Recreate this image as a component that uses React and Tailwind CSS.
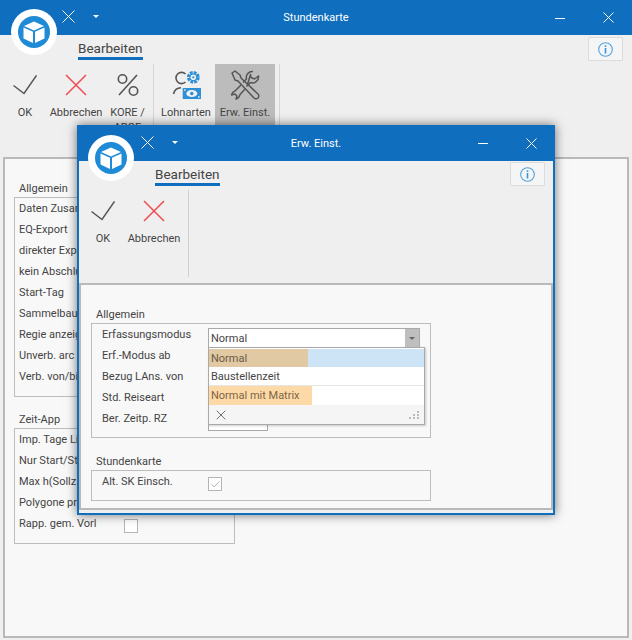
import React from 'react';
import { Check, X } from 'lucide-react';

function CubeLogo({ className }) {
  return (
    <div className={`${className} absolute w-[46px] h-[46px] rounded-full bg-white flex items-center justify-center`}>
      <div className="w-[32px] h-[32px] rounded-full bg-[#1f8ad6] flex items-center justify-center">
        <svg width="24" height="24" viewBox="0 0 24 24" fill="#fff">
          <path d="M12 1.5 L22 6 L12 10.5 L2 6 Z" />
          <path d="M1.5 7.5 L11 11.8 V23 L1.5 18.5 Z" />
          <path d="M22.5 7.5 L13 11.8 V23 L22.5 18.5 Z" />
        </svg>
      </div>
    </div>
  );
}

function TitleBar({ title, height, rightPad }) {
  return (
    <div className={`${height} shrink-0 bg-[#106ebe] grid grid-cols-[1fr_auto_1fr] items-center text-white`}>
      <div className="flex items-center pl-[62px] gap-[18px] -mt-[2px]">
        <svg width="13" height="13" viewBox="0 0 13 13" stroke="#fff" strokeWidth="1"><path d="M0.5 0.5 L12.5 12.5 M12.5 0.5 L0.5 12.5" /></svg>
        <div className="w-0 h-0 border-x-[3px] border-x-transparent border-t-[3px] border-t-white" />
      </div>
      <div className="text-[11px] leading-none">{title}</div>
      <div className={`${rightPad} flex items-center justify-end gap-[38px]`}>
        <div className="w-[10px] h-px bg-white mt-[1px]" />
        <svg width="11" height="11" viewBox="0 0 11 11" stroke="#fff" strokeWidth="1"><path d="M0.5 0.5 L10.5 10.5 M10.5 0.5 L0.5 10.5" /></svg>
      </div>
    </div>
  );
}

function InfoButton({ className }) {
  return (
    <div className={`${className} w-[35px] h-[24px] border border-[#dcdcdc] bg-[#f5f5f5] rounded-[1px] flex items-center justify-center`}>
      <svg width="15" height="15" viewBox="0 0 15 15" fill="none">
        <circle cx="7.5" cy="7.5" r="6.8" stroke="#4fa3e0" strokeWidth="1.1" />
        <rect x="6.7" y="3.3" width="1.6" height="1.6" fill="#3a95d8" />
        <rect x="6.7" y="6" width="1.6" height="5.5" fill="#3a95d8" />
      </svg>
    </div>
  );
}

function CheckIcon() {
  return (
    <svg width="24" height="20" viewBox="0 0 24 20" fill="none" stroke="#555" strokeWidth="1.5"><path d="M0.5 10.5 L11 18.5 L23.5 0.5" /></svg>
  );
}

function CrossIcon() {
  return (
    <svg width="22" height="22" viewBox="0 0 22 22" fill="none" stroke="#ee4a4f" strokeWidth="1.5"><path d="M1 1 L21 21 M21 1 L1 21" /></svg>
  );
}

function PercentIcon() {
  return (
    <svg width="22" height="22" viewBox="0 0 22 22" fill="none" stroke="#555" strokeWidth="1.6">
      <path d="M20 1 L2 21" />
      <circle cx="5.5" cy="5" r="4.2" />
      <circle cx="16.5" cy="17" r="4.2" />
    </svg>
  );
}

function LohnartenIcon() {
  return (
    <svg width="30" height="30" viewBox="0 0 30 30" fill="none">
      <path d="M14.5 4 A5.6 5.6 0 1 0 14.5 12" stroke="#555" strokeWidth="1.6" />
      <path d="M2.5 24 A8 8 0 0 1 10 17.7" stroke="#555" strokeWidth="1.6" />
      <circle cx="22.3" cy="7.3" r="5" stroke="#2d8fd6" strokeWidth="2.8" strokeDasharray="2.8 1.1" />
      <circle cx="22.3" cy="7.3" r="3.4" stroke="#2d8fd6" strokeWidth="1.2" />
      <circle cx="22.3" cy="7.3" r="1.1" fill="#2d8fd6" />
      <rect x="11.7" y="18" width="18.3" height="11" fill="#2d8fd6" />
      <ellipse cx="20.8" cy="23.5" rx="5.5" ry="3.6" fill="#f0efef" />
      <circle cx="20.8" cy="23.5" r="1.7" fill="#2d8fd6" />
      <rect x="13" y="19.3" width="1.6" height="1.4" fill="#f0efef" />
      <rect x="27" y="26.3" width="1.6" height="1.4" fill="#f0efef" />
    </svg>
  );
}

function ToolsIcon() {
  return (
    <svg width="30" height="30" viewBox="0 0 30 30" fill="none" stroke="#555" strokeWidth="1.5" strokeLinejoin="round">
      <path d="M2 3 L5 1 L10 5 L11 8 L28 24 A2.8 2.8 0 0 1 24 28 L8 11 L5 10 Z" />
      <path d="M23 1.5 A6 6 0 0 0 16.5 9 L13 12.5 M17 16 L20.5 12.5 A6 6 0 0 0 28.5 6 L24.5 9 L21 7.5 L20.5 4.5 Z" />
      <path d="M11 15 L5 21 A5.5 5.5 0 0 0 1.5 25 L5 24 L7 26 L6 29 A5.5 5.5 0 0 0 10 24.5 L15 19" />
    </svg>
  );
}

function RibbonButton({ icon, label, width, active }) {
  return (
    <div className={`${width} ${active ? 'bg-[#bcbcbc]' : ''} h-[61px] flex flex-col items-center shrink-0`}>
      <div className="h-[41px] shrink-0 flex items-center justify-center">{icon}</div>
      <div className="text-[11px] leading-[15px] text-center text-[#444] whitespace-pre-line shrink-0">{label}</div>
    </div>
  );
}

function Tab({ className }) {
  return (
    <div className={`${className} w-fit pt-[4px] text-[13.5px] leading-[18px] text-[#444] border-b-[3px] border-[#106ebe]`}>Bearbeiten</div>
  );
}

function Row({ label, labelWidth, children }) {
  return (
    <div className="h-[21px] flex items-start text-[11px] leading-[21px] text-[#444] whitespace-nowrap">
      <span className={`${labelWidth} shrink-0`}>{label}</span>
      {children}
    </div>
  );
}

function Group({ title, className, boxClass, children }) {
  return (
    <div className={className}>
      <div className="text-[11px] leading-[17px] text-[#444] pl-[5px]">{title}</div>
      <div className={`${boxClass} border border-[#bdbdbd]`}>{children}</div>
    </div>
  );
}

function CheckBox({ checked }) {
  return (
    <div className="mt-[6px] w-[14px] h-[14px] border border-[#b5b5b5] bg-white flex items-center justify-center">
      {checked && <Check size={11} strokeWidth={1.5} color="#888" />}
    </div>
  );
}

// behind the dialog, only the start of these labels can be read
const allgemein = ['Daten Zusam', 'EQ-Export', 'direkter Exp', 'kein Abschlu', 'Start-Tag', 'Sammelbaus', 'Regie anzeig', 'Unverb. arc', 'Verb. von/bi'];
const zeitApp = ['Imp. Tage Li', 'Nur Start/St', 'Max h(Sollz.', 'Polygone pr'];
const dialogRows = ['Erf.-Modus ab', 'Bezug LAns. von', 'Std. Reiseart', 'Ber. Zeitp. RZ'];

function ErwEinstDialog() {
  return (
    <div className="absolute left-[77px] top-[125px] w-[478px] h-[390px] border-2 border-t-0 border-[#106ebe] bg-[#f0efef] shadow-[0_0_10px_rgba(0,0,0,0.55)] flex flex-col">
      <TitleBar title="Erw. Einst." height="h-[36px]" rightPad="pr-[16px]" />
      <div className="h-[122px] shrink-0 relative">
        <Tab className="ml-[76px]" />
        <InfoButton className="absolute right-[8px] top-[1px]" />
        <div className="flex mt-[4px]">
          <RibbonButton icon={<CheckIcon />} label="OK" width="w-[48px]" />
          <RibbonButton icon={<CrossIcon />} label="Abbrechen" width="w-[54px]" />
          <div className="ml-[7px] w-px h-[87px] bg-[#cfcfcf]" />
        </div>
      </div>
      <div className="flex-1 border-2 border-[#b9b9b9] bg-[#f8f8f8] pl-[10px] pt-[21px] mb-[3px]">
        <Group title="Allgemein" boxClass="w-[340px] h-[115px] px-[10px]">
          <Row label="Erfassungsmodus" labelWidth="w-[106px]">
            <div className="relative mt-[4px] w-[214px] h-[20px] border border-[#a9a9a9] bg-white flex items-center leading-none">
              <span className="pl-[2px] flex-1">Normal</span>
              <div className="w-[14px] h-full bg-[#bfbfbf] flex items-center justify-center">
                <div className="w-0 h-0 border-x-[3px] border-x-transparent border-t-[3px] border-t-[#666]" />
              </div>
              <div className="absolute left-[-1px] top-[18px] z-10 w-[217px] h-[78px] border border-[#a9a9a9] bg-white shadow-[1px_1px_2px_rgba(0,0,0,0.2)] flex flex-col">
                <div className="h-[18px] mt-[1px] bg-[#cde4f7] flex items-center">
                  <span className="h-full w-[99px] bg-[#e0c9a3] text-[#6b5b45] pl-[2px] flex items-center">Normal</span>
                </div>
                <div className="h-[19px] border-b border-[#e6e6e6] pl-[2px] flex items-center">Baustellenzeit</div>
                <div className="h-[19px] flex items-center">
                  <span className="h-full w-[103px] bg-[#fdd9a8] text-[#7d6544] pl-[2px] flex items-center">Normal mit Matrix</span>
                </div>
                <div className="flex-1 bg-[#f5f5f5] flex items-center justify-between pl-[4px] pr-[4px]">
                  <X size={16} strokeWidth={1.4} color="#666" />
                  <div className="grid grid-cols-3 gap-px w-[11px]">
                    <span /><span /><span className="w-[2px] h-[2px] bg-[#bbb]" />
                    <span /><span className="w-[2px] h-[2px] bg-[#bbb]" /><span className="w-[2px] h-[2px] bg-[#bbb]" />
                    <span className="w-[2px] h-[2px] bg-[#bbb]" /><span className="w-[2px] h-[2px] bg-[#bbb]" /><span className="w-[2px] h-[2px] bg-[#bbb]" />
                  </div>
                </div>
              </div>
            </div>
          </Row>
          {dialogRows.map((label, i) => (
            <Row key={label} label={label} labelWidth="w-[106px]">
              {i === 3 && <div className="w-[60px] h-[20px] border border-[#a9a9a9] bg-white mt-[3px]" />}
            </Row>
          ))}
        </Group>
        <Group title="Stundenkarte" className="mt-[15px]" boxClass="w-[340px] h-[31px] px-[10px]">
          <Row label="Alt. SK Einsch." labelWidth="w-[106px]"><CheckBox checked /></Row>
        </Group>
      </div>
    </div>
  );
}

export default function App() {
  return (
    <div className="relative w-[632px] h-[640px] overflow-hidden bg-[#f0efef] font-['Roboto','Open_Sans',sans-serif]">
      <TitleBar title="Stundenkarte" height="h-[35px]" rightPad="pr-[18px]" />
      <CubeLogo className="left-[11px] top-[9px]" />
      <div className="h-[120px] relative">
        <Tab className="ml-[78px]" />
        <InfoButton className="absolute right-[9px] top-[2px]" />
        <div className="flex mt-[4px]">
          <RibbonButton icon={<CheckIcon />} label="OK" width="w-[50px]" />
          <RibbonButton icon={<CrossIcon />} label="Abbrechen" width="w-[52px]" />
          <RibbonButton icon={<PercentIcon />} label={'KORE /\nARGE'} width="w-[51px]" />
          <div className="w-px h-[61px] bg-[#d5d5d5]" />
          <div className="w-[3px]" />
          <RibbonButton icon={<LohnartenIcon />} label="Lohnarten" width="w-[58px]" />
          <RibbonButton icon={<ToolsIcon />} label="Erw. Einst." width="w-[60px]" active />
          <div className="ml-[4px] w-px h-[61px] bg-[#d5d5d5]" />
        </div>
      </div>
      <div className="h-[481px] mx-[3px] mt-[2px] border-2 border-[#b9b9b9] bg-[#f8f8f8] pl-[9px] pt-[21px]">
        <Group title="Allgemein" boxClass="w-[221px] h-[200px] px-[4px]">
          {allgemein.map((label) => <Row key={label} label={label} labelWidth="w-[105px]" />)}
        </Group>
        <Group title="Zeit-App" className="mt-[14px]" boxClass="w-[221px] h-[116px] px-[4px]">
          {zeitApp.map((label) => <Row key={label} label={label} labelWidth="w-[105px]" />)}
          <Row label="Rapp. gem. Vorl" labelWidth="w-[105px]"><CheckBox /></Row>
        </Group>
      </div>
      <ErwEinstDialog />
      <CubeLogo className="left-[88px] top-[135px]" />
    </div>
  );
}
